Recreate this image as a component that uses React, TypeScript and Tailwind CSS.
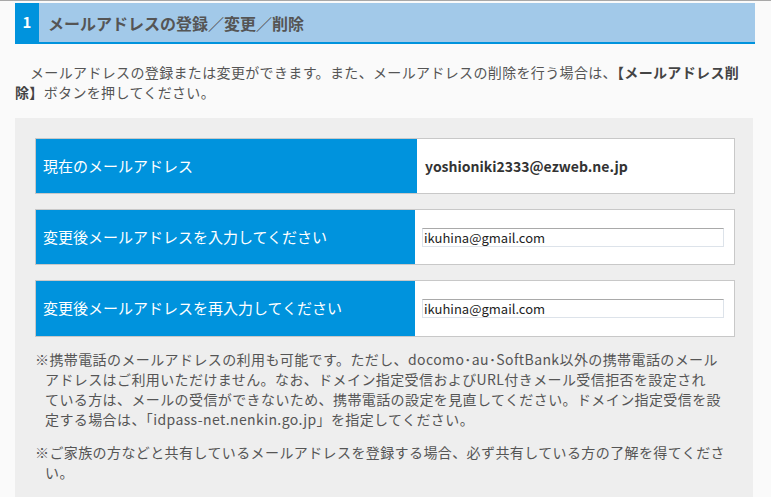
import React from "react";

const font = { fontFamily: '"Noto Sans CJK JP", "Noto Sans", sans-serif' };

function Row({
  label,
  labelW,
  children,
  h,
}: {
  label: string;
  labelW: string;
  children: React.ReactNode;
  h: string;
}) {
  return (
    <div className={`flex border border-[#c8c8c8] bg-white ${h}`}>
      <div
        className={`flex items-center bg-[#0093dd] pl-[7px] text-[15px] text-white ${labelW}`}
      >
        {label}
      </div>
      <div className="flex flex-1 items-center">{children}</div>
    </div>
  );
}

function Input({ value }: { value: string }) {
  return (
    <input
      readOnly
      value={value}
      className="ml-[7px] h-[19px] w-[302px] border border-[#dde3ea] border-t-[#a9a9a9] bg-white px-[1px] text-[13px] leading-[17px] text-[#222] outline-none"
      style={font}
    />
  );
}

export default function App() {
  return (
    <div
      className="h-[497px] w-[771px] overflow-hidden border-t border-[#a8a8a8] bg-[#fafafa] text-[#555]"
      style={font}
    >
      <div className="pl-[15px] pt-[2px]">
        <div className="flex h-[41px] w-[740px] border-b-2 border-[#0093dd] bg-[#a2c9e9]">
          <div className="flex w-[24px] items-center justify-center bg-[#0093dd] text-[15px] font-bold text-white">
            1
          </div>
          <div className="flex items-center pl-[9px] text-[16px] font-bold text-[#555]">
            メールアドレスの登録／変更／削除
          </div>
        </div>

        <p className="mt-[18px] w-[740px] text-[14px] leading-[20px] tracking-[0.35px] [text-indent:15px]">
          メールアドレスの登録または変更ができます。また、メールアドレスの削除を行う場合は、
          <b className="text-[#444]">【メールアドレス削</b>
          <br />
          <b className="text-[#444]">除】</b>ボタンを押してください。
        </p>

        <div className="mt-[16px] w-[738px] bg-[#eeeeee] pb-[20px] pl-[20px] pr-[18px] pt-[20px]">
          <div className="flex flex-col gap-[15px]">
            <Row label="現在のメールアドレス" labelW="w-[381px]" h="h-[56px]">
              <span className="pl-[8px] text-[14px] font-bold text-[#333]">
                yoshioniki2333@ezweb.ne.jp
              </span>
            </Row>
            <Row
              label="変更後メールアドレスを入力してください"
              labelW="w-[379px]"
              h="h-[56px]"
            >
              <Input value="ikuhina@gmail.com" />
            </Row>
            <Row
              label="変更後メールアドレスを再入力してください"
              labelW="w-[379px]"
              h="h-[57px]"
            >
              <Input value="ikuhina@gmail.com" />
            </Row>
          </div>

          <div className="mt-[12px] text-[14px] leading-[20px] tracking-[0.4px]">
            <p className="whitespace-nowrap pl-[10px] [text-indent:-10px]">
              ※携帯電話のメールアドレスの利用も可能です。ただし、docomo･au･SoftBank以外の携帯電話のメール
              <br />
              アドレスはご利用いただけません。なお、ドメイン指定受信およびURL付きメール受信拒否を設定され
              <br />
              ている方は、メールの受信ができないため、携帯電話の設定を見直してください。ドメイン指定受信を設
              <br />
              定する場合は、「idpass-net.nenkin.go.jp」を指定してください。
            </p>
            <p className="mt-[13px] whitespace-nowrap pl-[10px] [text-indent:-10px]">
              ※ご家族の方などと共有しているメールアドレスを登録する場合、必ず共有している方の了解を得てくださ
              <br />
              い。
            </p>
          </div>
        </div>
      </div>
    </div>
  );
}
